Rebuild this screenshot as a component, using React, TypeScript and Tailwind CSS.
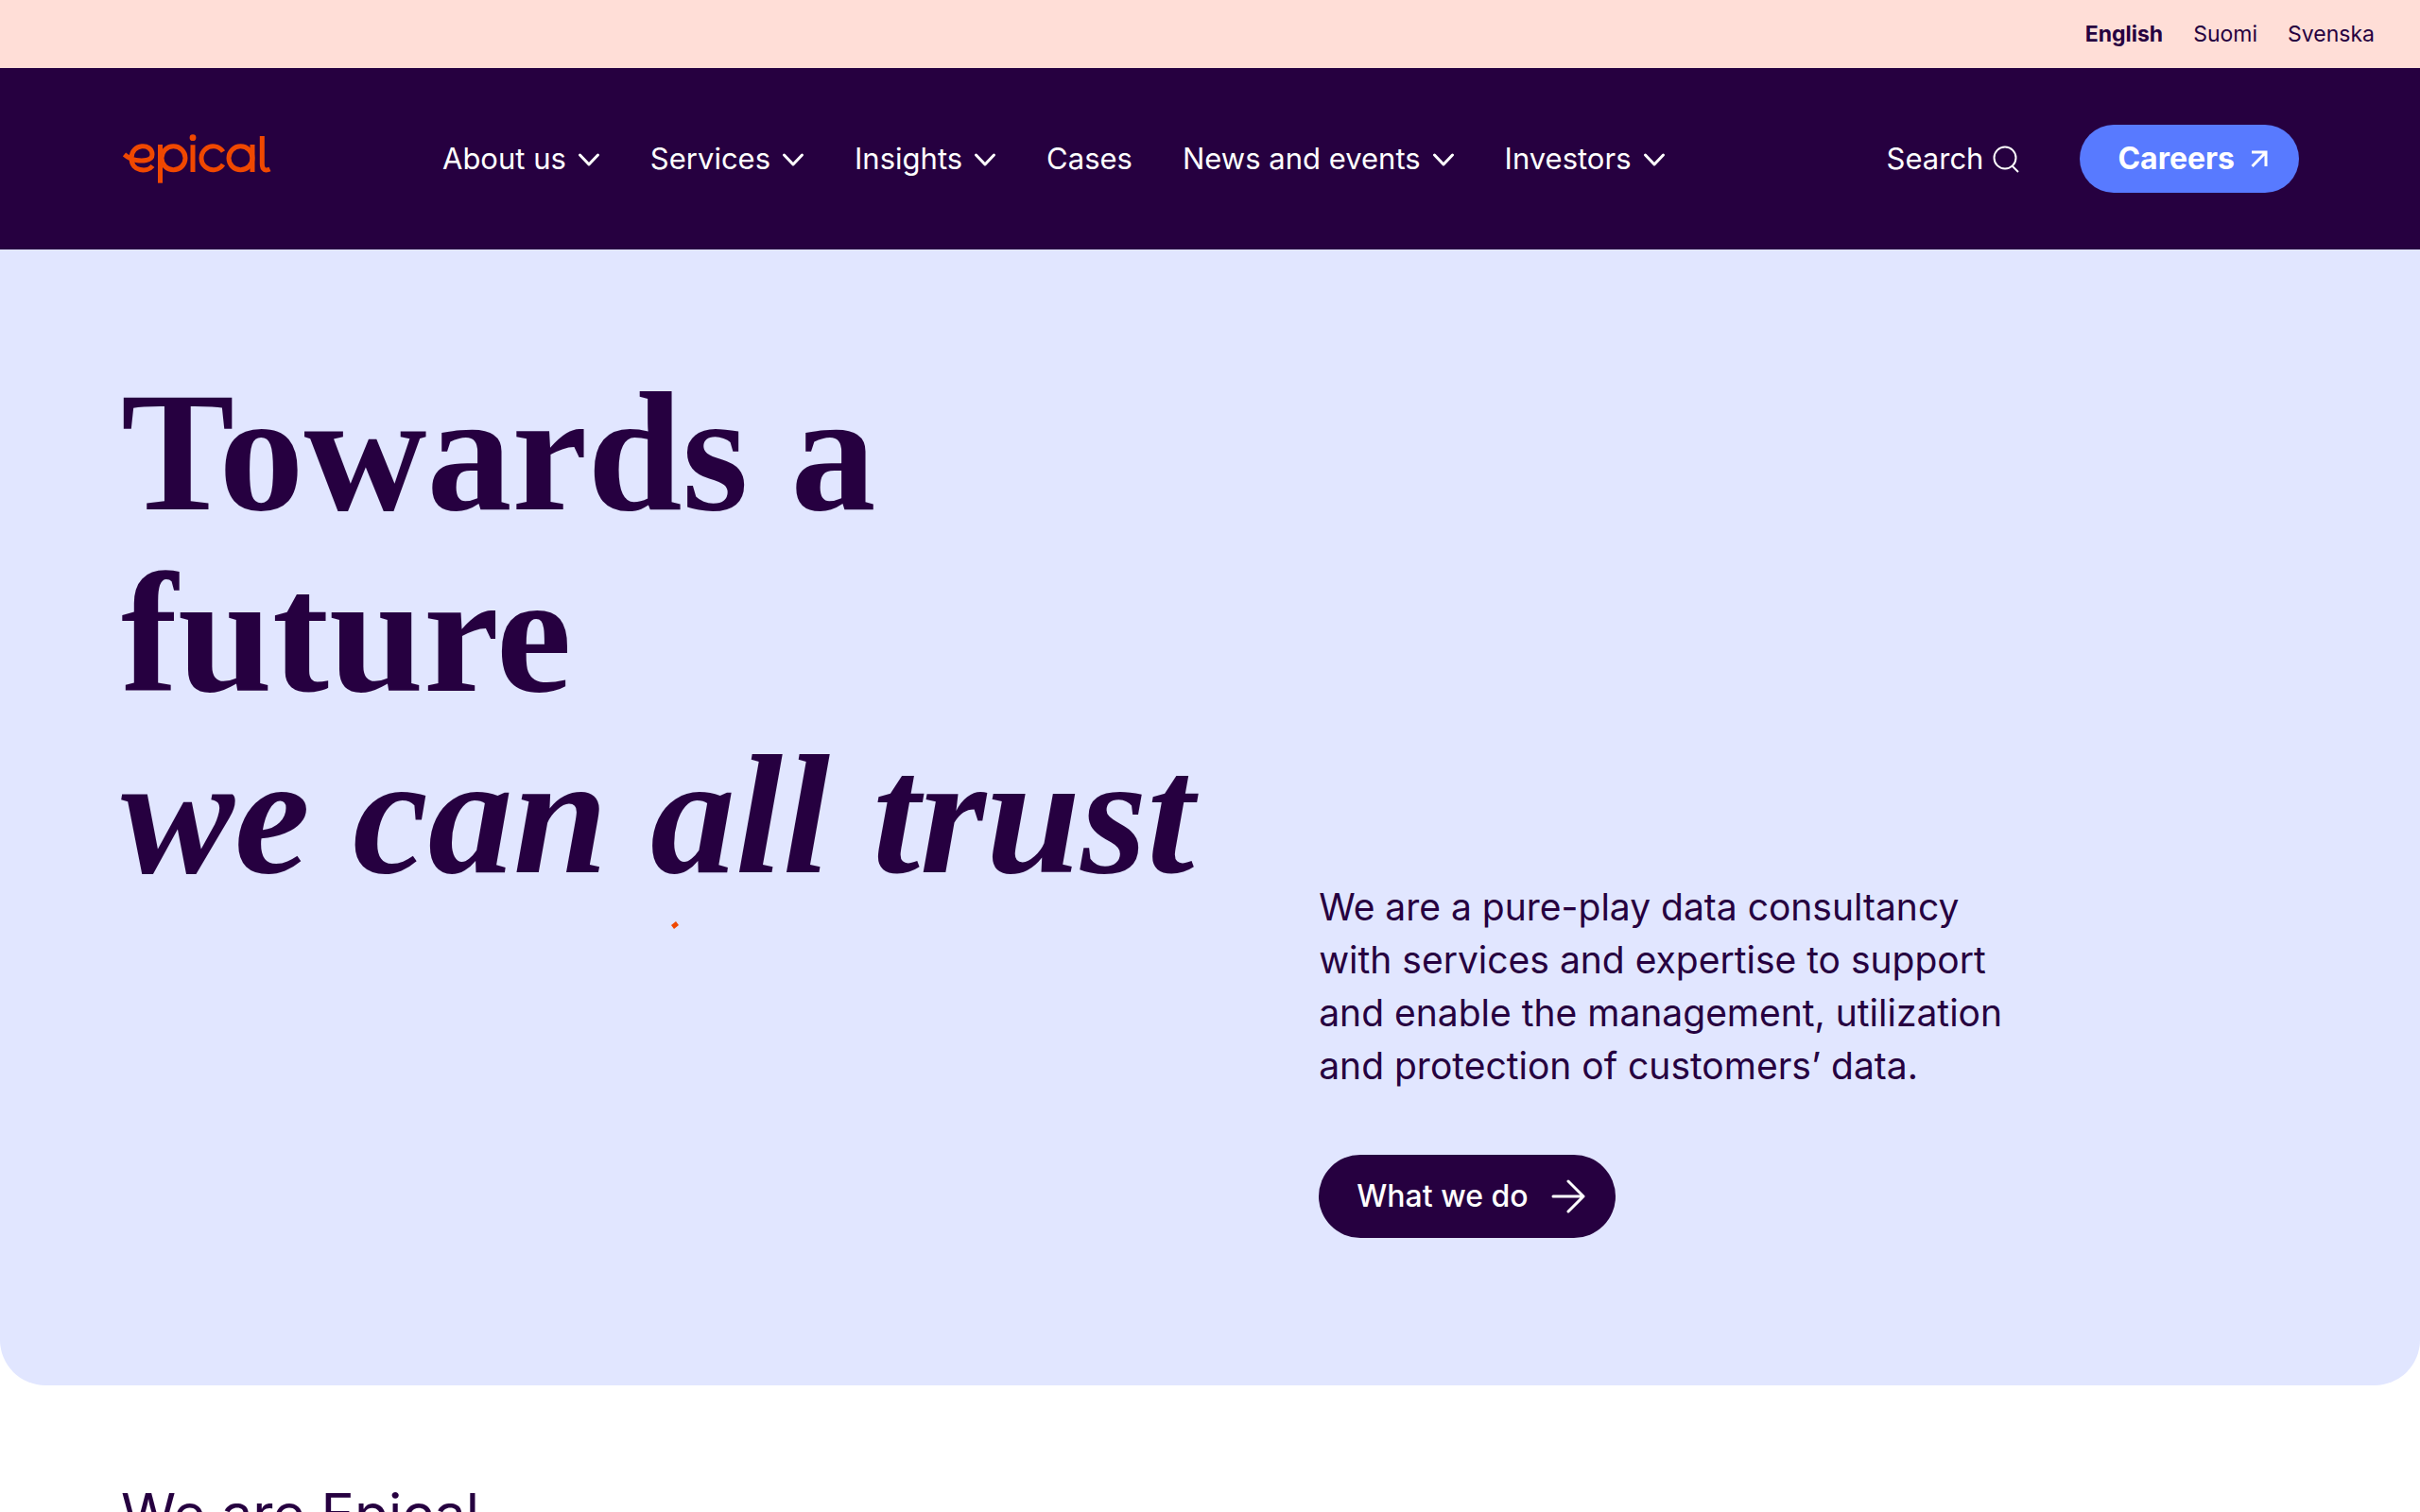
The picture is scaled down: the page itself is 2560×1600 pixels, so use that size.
import React from "react";

const languages = [
  { label: "English", current: true },
  { label: "Suomi", current: false },
  { label: "Svenska", current: false },
];

const menu = [
  { label: "About us", hasMenu: true },
  { label: "Services", hasMenu: true },
  { label: "Insights", hasMenu: true },
  { label: "Cases", hasMenu: false },
  { label: "News and events", hasMenu: true },
  { label: "Investors", hasMenu: true },
];

function Logo() {
  return (
    <svg width="158" height="56" viewBox="0 0 158 56" fill="none" stroke="#f04800" strokeWidth="5" aria-hidden="true">
      <path d="M31.5 35.5C26 42.5 9 42 9 27.5C9 11.5 31 11 31 23.5C31 30.500 20 30.500 14 29.500C8 28.500 5 26.500 1.500 23.500" />
      <path d="M39.500 13V53.700" />
      <circle cx="53.500" cy="27.300" r="12.500" />
      <path d="M74 13.300V42" />
      <circle cx="74" cy="5.700" r="3.400" fill="#f04800" stroke="none" />
      <path d="M106 20.500A12.500 12.500 0 1 0 106 34" />
      <circle cx="124.500" cy="27.300" r="12.500" />
      <path d="M137 13V42" />
      <path d="M147.300 4V33.500C147.300 40 151 41 155.500 39" />
    </svg>
  );
}

function Chevron() {
  return (
    <svg width="24" height="24" viewBox="0 0 24 24" fill="none" stroke="currentColor" strokeWidth="3" strokeLinecap="round" strokeLinejoin="round" aria-hidden="true">
      <path d="M2.500 8L12 18L21.500 8" />
    </svg>
  );
}

function SearchIcon() {
  return (
    <svg width="28" height="32" viewBox="0 0 28 32" fill="none" stroke="currentColor" strokeWidth="2" aria-hidden="true">
      <circle cx="13" cy="15" r="11.500" />
      <path d="M20.500 23.500L27 30" />
    </svg>
  );
}

export default function App() {
  return (
    <div className="h-screen overflow-hidden bg-white font-[Inter,sans-serif] text-[#260040]">
      <div className="flex h-[72px] items-center justify-end gap-8 bg-[#ffded7] px-12 text-[23px]">
        {languages.map((l) => (
          <a key={l.label} href="#" className={l.current ? "font-bold" : ""}>
            {l.label}
          </a>
        ))}
      </div>

      <header className="flex h-48 items-center bg-[#260040] pr-32 pl-[130px] text-[31px] text-white">
        <a href="#" aria-label="epical" className="mr-[180px] shrink-0">
          <Logo />
        </a>
        <nav className="flex items-center gap-[53px] whitespace-nowrap">
          {menu.map((m) =>
            m.hasMenu ? (
              <button key={m.label} className="flex items-center gap-3">
                {m.label}
                <Chevron />
              </button>
            ) : (
              <a key={m.label} href="#">
                {m.label}
              </a>
            ),
          )}
        </nav>
        <div className="ml-auto flex items-center gap-16">
          <button className="flex items-center gap-2.5">
            Search
            <SearchIcon />
          </button>
          <a href="#" className="flex h-[72px] items-center gap-4 rounded-full bg-[#587aff] pr-8 pl-10 text-[32px] font-bold">
            Careers
            <svg width="20" height="20" viewBox="0 0 20 20" fill="none" stroke="currentColor" strokeWidth="3" aria-hidden="true">
              <path d="M2 3H17V18M17 3L2.500 18" />
            </svg>
          </a>
        </div>
      </header>

      <main>
        <section className="grid grid-cols-[55%_1fr] rounded-b-[48px] bg-[#e1e6ff] px-32 pt-[119px] pb-[156px]">
          <div>
            <h1 className="font-['Liberation_Serif',serif] text-[180px] leading-[192px] font-bold whitespace-nowrap">
              Towards a<br />
              future
              <br />
              <em>we can all trust</em>
            </h1>
            <svg className="mt-4 ml-[582px]" width="8" height="8" viewBox="0 0 8 8" aria-hidden="true">
              <path d="M0 4L5 0L8 4L3 8Z" fill="#f04800" />
            </svg>
          </div>
          <div className="flex flex-col items-start gap-[66px] pt-[549px]">
            <p className="text-[39px] leading-14">
              We are a pure-play data consultancy
              <br />
              with services and expertise to support
              <br />
              and enable the management, utilization
              <br />
              and protection of customers’ data.
            </p>
            <a href="#" className="flex h-[88px] items-center gap-6 rounded-full bg-[#260040] pr-8 pl-10 text-[32px] font-medium text-white">
              What we do
              <svg width="36" height="36" viewBox="0 0 36 36" fill="none" stroke="currentColor" strokeWidth="3" strokeLinecap="round" strokeLinejoin="round" aria-hidden="true">
                <path d="M2 18H34M18 2L34 18L18 34" />
              </svg>
            </a>
          </div>
        </section>

        <section className="px-32 pt-24">
          <h2 className="text-[59px] leading-[80px]">We are Epical</h2>
        </section>
      </main>
    </div>
  );
}
